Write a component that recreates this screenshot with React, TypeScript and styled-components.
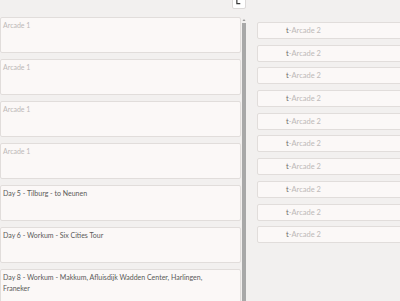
import React from "react";
import styled, { createGlobalStyle } from "styled-components";

const GlobalStyle = createGlobalStyle`
  html, body {
    margin: 0;
    padding: 0;
    background: #f2f0ef;
  }
  * {
    box-sizing: border-box;
  }
`;

const leftItems = [
  { id: 1, title: "Arcade 1", empty: true },
  { id: 2, title: "Arcade 1", empty: true },
  { id: 3, title: "Arcade 1", empty: true },
  { id: 4, title: "Arcade 1", empty: true },
  { id: 5, title: "Day 5 - Tilburg - to Neunen", empty: false },
  { id: 6, title: "Day 6 - Workum - Six Cities Tour", empty: false },
  {
    id: 7,
    title: "Day 8 - Workum - Makkum, Afluisdijk Wadden Center, Harlingen, Franeker",
    empty: false,
  },
];

const rightItems = Array.from({ length: 10 }, (_, i) => i);

function ExpandIcon() {
  return (
    <svg width="14" height="12" viewBox="0 0 14 12">
      <path d="M4.5 3 V8 H8.5" fill="none" stroke="#3a3a3a" strokeWidth="1.4" />
      <path d="M11 -1 V1.5" fill="none" stroke="#3a3a3a" strokeWidth="1.2" />
    </svg>
  );
}

function RailArrow() {
  return (
    <svg width="4" height="4" viewBox="0 0 4 4">
      <path d="M0.5 3 L2 1 L3.5 3 Z" fill="#9a9a9a" />
    </svg>
  );
}

function App() {
  return (
    <>
      <GlobalStyle />
      <Page>
        <LeftPane>
          <Header>
            <CornerButton>
              <ExpandIcon />
            </CornerButton>
          </Header>
          <LeftBody>
            <CardList>
              {leftItems.map((item) => (
                <DayCard key={item.id}>
                  <DayTitle $empty={item.empty}>{item.title}</DayTitle>
                </DayCard>
              ))}
            </CardList>
            <Rail>
              <RailArrow />
              <RailThumb />
            </Rail>
          </LeftBody>
        </LeftPane>
        <RightPane>
          {rightItems.map((i) => (
            <SlotCard key={i}>
              <SlotLabel>
                <span className="mark">t</span>-Arcade 2
              </SlotLabel>
            </SlotCard>
          ))}
        </RightPane>
      </Page>
    </>
  );
}

const Page = styled.div`
  display: flex;
  width: 400px;
  height: 301px;
  overflow: hidden;
  background: #f2f0ef;
  font-family: Lato, "Noto Sans", sans-serif;
  -webkit-font-smoothing: antialiased;
`;

const LeftPane = styled.div`
  display: flex;
  flex-direction: column;
  width: 246px;
  flex-shrink: 0;
`;

const Header = styled.div`
  height: 17px;
  display: flex;
  justify-content: flex-end;
  align-items: flex-start;
`;

const CornerButton = styled.div`
  width: 14px;
  height: 12px;
  margin-top: -3px;
  background: #ffffff;
  border: 1px solid #dcd9d8;
  border-radius: 2px;
  display: flex;
  align-items: flex-end;
  justify-content: center;
  overflow: hidden;

  svg {
    display: block;
  }
`;

const LeftBody = styled.div`
  flex: 1;
  display: flex;
  min-height: 0;
`;

const CardList = styled.div`
  width: 241px;
  display: flex;
  flex-direction: column;
  gap: 6px;
`;

const DayCard = styled.div`
  height: 36px;
  flex-shrink: 0;
  background: #fbf8f7;
  border: 1px solid #e1dddb;
  border-radius: 2px;
  padding: 2px 16px 2px 2px;
`;

const DayTitle = styled.div<{ $empty: boolean }>`
  font-size: 7px;
  line-height: 11px;
  color: ${(props) => (props.$empty ? "#bdb9b8" : "#5a5858")};
`;

const Rail = styled.div`
  width: 4px;
  margin-left: 1px;
  display: flex;
  flex-direction: column;
  align-items: center;
  padding-top: 1px;
`;

const RailThumb = styled.div`
  flex: 1;
  width: 4px;
  margin-top: 1px;
  background: #a8a8a8;
`;

const RightPane = styled.div`
  flex: 1;
  display: flex;
  flex-direction: column;
  padding-left: 11px;
  padding-top: 22px;
  gap: 5.7px;
`;

const SlotCard = styled.div`
  width: 160px;
  height: 17px;
  flex-shrink: 0;
  display: flex;
  align-items: center;
  padding-left: 28px;
  background: #fbf8f7;
  border: 1px solid #e1dddb;
  border-radius: 2px;
`;

const SlotLabel = styled.span`
  font-size: 7.5px;
  line-height: 11px;
  color: #bdb9b8;

  .mark {
    color: #6e6a69;
  }
`;

export default App;
